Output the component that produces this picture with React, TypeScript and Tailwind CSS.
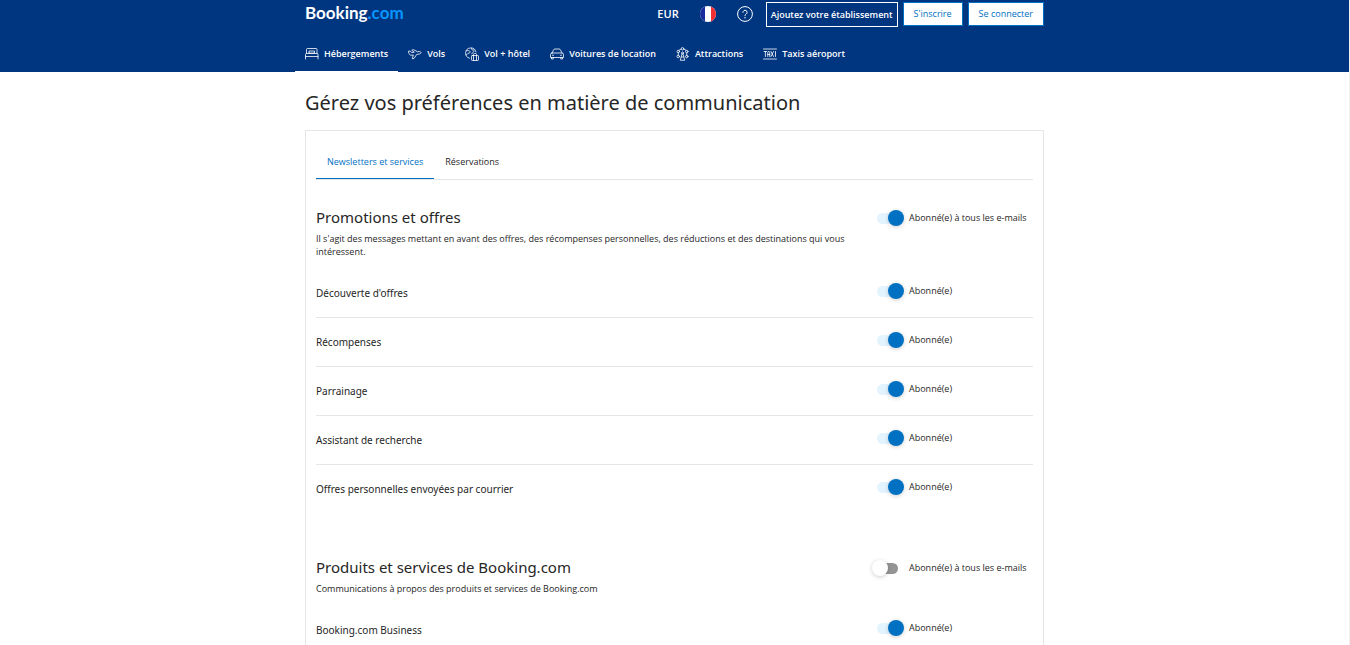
import React, { useState } from 'react';

interface IconProps {
  children: React.ReactNode;
}

const NavIcon: React.FC<IconProps> = ({ children }) => (
  <svg
    viewBox="0 0 28 28"
    className="h-3.5 w-3.5 shrink-0"
    fill="none"
    stroke="currentColor"
    strokeWidth="1.6"
    strokeLinecap="round"
    strokeLinejoin="round"
    aria-hidden="true"
  >
    {children}
  </svg>
);

const BedIcon = () => (
  <NavIcon>
    <path d="M3 13V5a2 2 0 0 1 2-2h17a2 2 0 0 1 2 2v8" />
    <path d="M8 12V8h11v4H8" />
    <path d="M1 24v-9a2 2 0 0 1 2-2h21a2 2 0 0 1 2 2v9M1 19h25" />
  </NavIcon>
);

const PlaneIcon = () => (
  <NavIcon>
    <path d="M1 8.500 4 8l3.500 3 5-.6-5-4 3.500-1 8 4 3.500-.4c2 0 3.500 1 3.500 2.300s-1.500 2.400-3.500 2.700l-5 .8-5.500 8.200-3.500.5 2.200-7.500-5 .4c-1.500 0-2.400-.8-3-2.200z" />
  </NavIcon>
);

const PackageIcon = () => (
  <NavIcon>
    <path d="M9 22.500A10.500 10.500 0 1 1 22 10" />
    <path d="M3 7.500c3-1 6-.5 7 1.500s-1 3-3 3.500-2 3-4.500 3M13 2.500c-.5 2.500 1 3.500 3 3.500s3 1.500 1.500 3.500-3.500 1.500-4 4" />
    <rect x="13" y="17" width="14" height="10" rx="1.500" />
    <path d="M17 17v-2a2 2 0 0 1 2-2h2a2 2 0 0 1 2 2v2M17 17v10M23 17v10" />
  </NavIcon>
);

const CarIcon = () => (
  <NavIcon>
    <path d="M4 12 7 6a3 3 0 0 1 2.700-2h8.600A3 3 0 0 1 21 6l3 6" />
    <path d="M4 12h20a3 3 0 0 1 3 3v6H1v-6a3 3 0 0 1 3-3z" />
    <path d="M3 21v3h3.500v-3M21.500 21v3H25v-3M5 16.500h2M21 16.500h2" />
  </NavIcon>
);

const WheelIcon = () => (
  <NavIcon>
    <circle cx="13" cy="12" r="2" />
    <circle cx="13" cy="3.500" r="2.500" />
    <circle cx="4.500" cy="9" r="2.500" />
    <circle cx="21.500" cy="9" r="2.500" />
    <circle cx="4.500" cy="19" r="2.500" />
    <circle cx="21.500" cy="19" r="2.500" />
    <path d="M6 6.500 10.500 4M15.500 4 20 6.500M4.500 11.500v5M21.500 11.500v5" />
    <path d="M12 14 8.500 26.500h9L14 14M11 20h4" />
  </NavIcon>
);

const TaxiIcon = () => (
  <NavIcon>
    <path d="M1 4h26M1 24h26" />
    <path d="M2 9h5.500M4.800 9v10M9.500 19v-8a2 2 0 0 1 4 0v8M9.500 15h4M16 9l5 10M21 9l-5 10M25 9v10" />
  </NavIcon>
);

const FlagIcon = () => (
  <svg viewBox="0 0 16 16" className="h-4 w-4" aria-hidden="true">
    <clipPath id="flag-round">
      <circle cx="8" cy="8" r="8" />
    </clipPath>
    <g clipPath="url(#flag-round)">
      <path fill="#fff" d="M0 0h16v16H0z" />
      <path fill="#1a2b9b" d="M0 0h5v16H0z" />
      <path fill="#f22e35" d="M11 0h5v16h-5z" />
    </g>
  </svg>
);

const HelpIcon = () => (
  <svg viewBox="0 0 16 16" className="h-4 w-4" fill="none" stroke="currentColor" aria-hidden="true">
    <circle cx="8" cy="8" r="7.400" />
    <path d="M5.900 6.300a2.100 2.100 0 1 1 3.200 1.800c-.7.400-1.100.8-1.100 1.600" strokeLinecap="round" />
    <circle cx="8" cy="11.800" r=".7" fill="currentColor" stroke="none" />
  </svg>
);

const navItems = [
  { label: 'Hébergements', icon: <BedIcon />, active: true },
  { label: 'Vols', icon: <PlaneIcon /> },
  { label: 'Vol + hôtel', icon: <PackageIcon /> },
  { label: 'Voitures de location', icon: <CarIcon /> },
  { label: 'Attractions', icon: <WheelIcon /> },
  { label: 'Taxis aéroport', icon: <TaxiIcon /> }
];

const sections = [
  {
    title: 'Promotions et offres',
    description:
      "Il s'agit des messages mettant en avant des offres, des récompenses personnelles, des réductions et des destinations qui vous intéressent.",
    subscribed: true,
    items: [
      "Découverte d'offres",
      'Récompenses',
      'Parrainage',
      'Assistant de recherche',
      'Offres personnelles envoyées par courrier'
    ]
  },
  {
    title: 'Produits et services de Booking.com',
    description: 'Communications à propos des produits et services de Booking.com',
    subscribed: false,
    items: ['Booking.com Business']
  }
];

const Header = () => (
  <header className="bg-[#003580] text-white">
    <div className="mx-auto max-w-[759px]">
      <div className="flex h-9 items-start justify-between px-2.5 pt-0.5">
        <a href="#" className="font-['Lato'] text-[17px] leading-[22px] font-bold">
          Booking<span className="text-[#0896ff]">.com</span>
        </a>
        <div className="flex items-start gap-[5px]">
          <button type="button" className="px-2 text-[11px] leading-6 font-semibold">
            EUR
          </button>
          <button type="button" aria-label="Français" className="flex h-6 items-center px-2">
            <FlagIcon />
          </button>
          <button type="button" aria-label="Aide" className="flex h-6 items-center px-2">
            <HelpIcon />
          </button>
          <a href="#" className="border border-white px-1 text-[9px] leading-[23px] font-semibold">
            Ajoutez votre établissement
          </a>
          <a href="#" className="border border-[#0071c2] bg-white px-2.5 text-[9px] leading-[22px] text-[#0071c2]">
            S'inscrire
          </a>
          <a href="#" className="border border-[#0071c2] bg-white px-2.5 text-[9px] leading-[22px] text-[#0071c2]">
            Se connecter
          </a>
        </div>
      </div>
      <nav className="flex">
        {navItems.map(({ label, icon, active }) => (
          <a
            key={label}
            href="#"
            className={`flex h-9 items-center gap-[5px] border-b px-2.5 text-[9px] font-semibold whitespace-nowrap ${
              active ? 'border-white' : 'border-transparent'
            }`}
          >
            {icon}
            {label}
          </a>
        ))}
      </nav>
    </div>
  </header>
);

interface ToggleProps {
  label: string;
  name: string;
  defaultOn: boolean;
}

const Toggle: React.FC<ToggleProps> = ({ label, name, defaultOn }) => {
  const [on, setOn] = useState(defaultOn);

  return (
    <label className="flex w-[161px] shrink-0 cursor-pointer items-center gap-[5px] text-[9px] leading-5 whitespace-nowrap">
      <input
        type="checkbox"
        className="sr-only"
        aria-label={`${name} : ${label}`}
        checked={on}
        onChange={() => setOn(!on)}
      />
      <span className={`flex w-8 items-center ${on ? 'justify-end' : 'justify-start'}`}>
        <span
          className={`flex h-[11px] w-[21px] items-center rounded-full ${
            on ? 'mr-1.5 justify-end bg-[#e4f4ff]' : 'ml-[5px] justify-start bg-[#949494]'
          }`}
        >
          <span
            className={`h-4 w-4 shrink-0 rounded-full shadow-[0_1px_4px_rgba(0,0,0,0.2)] ${
              on ? '-mr-1.5 bg-[#0071c2]' : '-ml-[5px] bg-white'
            }`}
          />
        </span>
      </span>
      {label}
    </label>
  );
};

export default function App() {
  return (
    <div className="min-h-screen border-r border-[#f1f1f1] bg-white font-['Open_Sans',sans-serif] text-[#262626]">
      <Header />
      <main className="mx-auto max-w-[759px] px-2.5 pt-[17px]">
        <h1 className="mb-[13px] font-['Noto_Sans'] text-[20px] leading-7">
          Gérez vos préférences en matière de communication
        </h1>
        <div className="border border-[#e6e6e6] p-2.5">
          <div role="tablist" className="flex border-b border-[#e6e6e6] text-[9px]">
            <button
              type="button"
              role="tab"
              aria-selected="true"
              className="h-[38px] border-b border-[#0071c2] px-[11px] pt-1 text-[#0071c2]"
            >
              Newsletters et services
            </button>
            <button
              type="button"
              role="tab"
              aria-selected="false"
              className="h-[38px] border-b border-transparent px-[11px] pt-1"
            >
              Réservations
            </button>
          </div>
          <div className="flex flex-col gap-11 pt-[27px]">
            {sections.map((section) => (
              <section key={section.title}>
                <div className="flex items-start justify-between">
                  <div className="max-w-[540px]">
                    <h2 className="font-['Noto_Sans'] text-[15px] leading-5">{section.title}</h2>
                    <p className="mt-[5px] text-[9px] leading-[13px]">{section.description}</p>
                  </div>
                  <div className="pt-px">
                    <Toggle
                      name={section.title}
                      label="Abonné(e) à tous les e-mails"
                      defaultOn={section.subscribed}
                    />
                  </div>
                </div>
                <ul className="mt-[11px] divide-y divide-[#e6e6e6]">
                  {section.items.map((item) => (
                    <li key={item} className="flex justify-between pb-3.5">
                      <span className="pt-3.5 font-['Noto_Sans'] text-[10px] leading-5">{item}</span>
                      <span className="pt-3">
                        <Toggle name={item} label="Abonné(e)" defaultOn />
                      </span>
                    </li>
                  ))}
                </ul>
              </section>
            ))}
          </div>
        </div>
      </main>
    </div>
  );
}
